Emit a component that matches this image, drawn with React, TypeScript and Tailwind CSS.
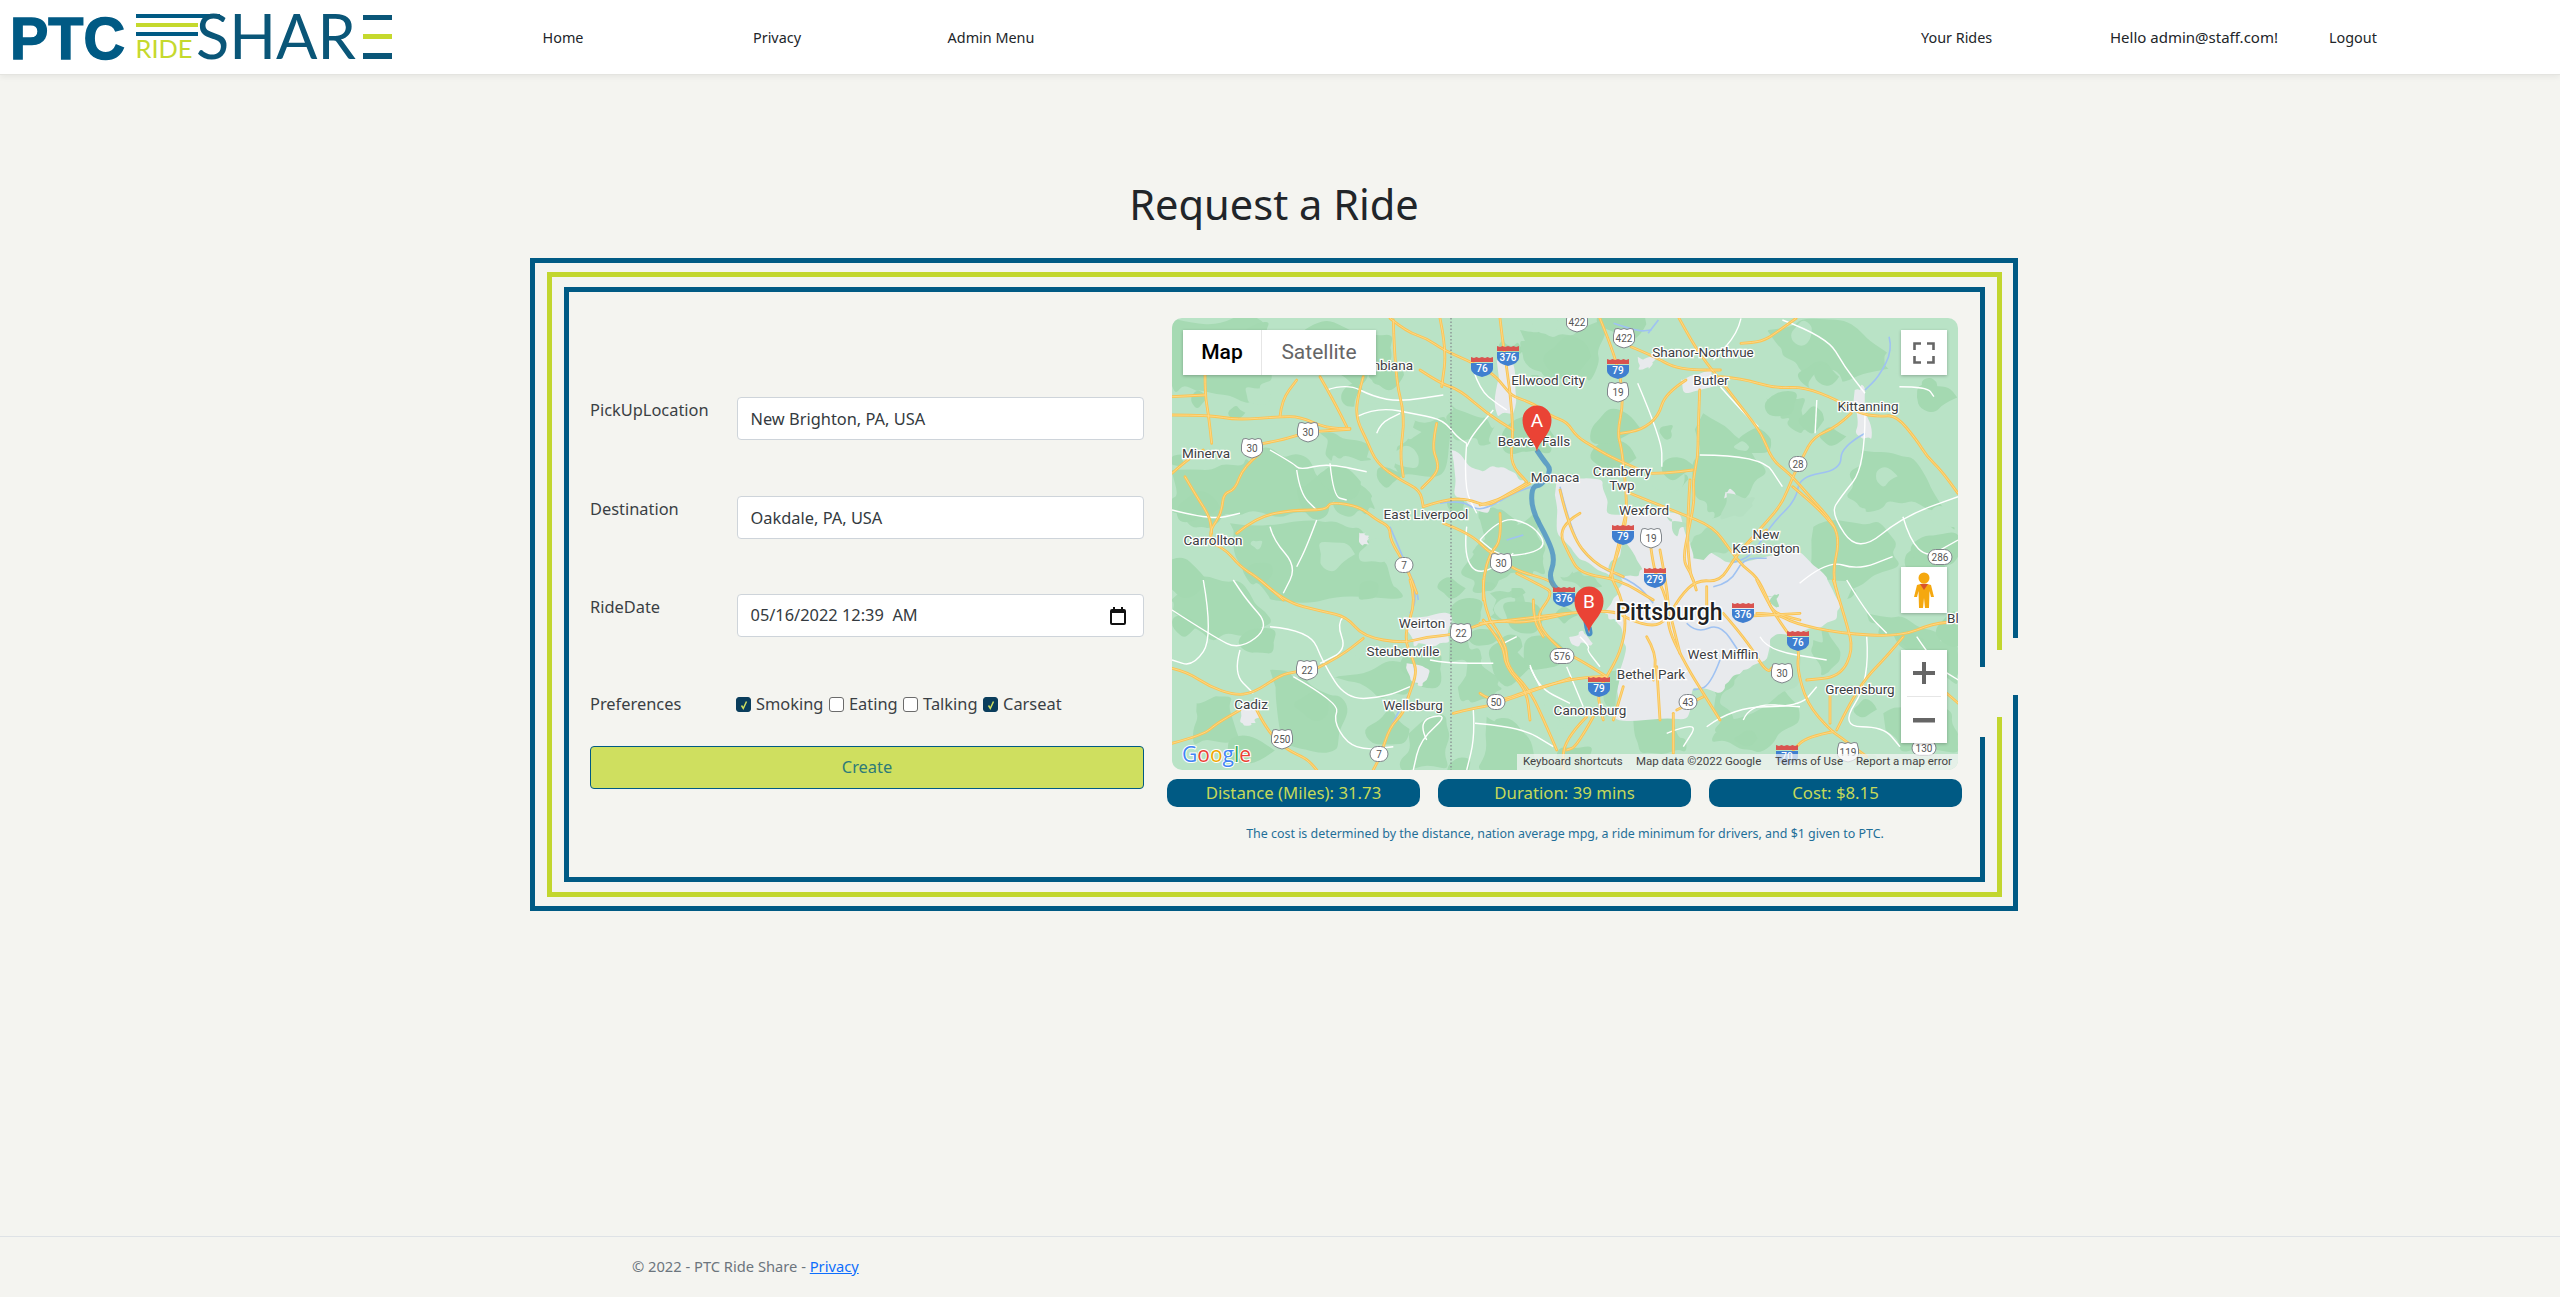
import React from "react";

type Pts = number[];
const z4 = (p: Pts) => p.map((v, i) => (i % 2 === 0 ? v / 3 - 12 : v / 3 - 18));
const z5 = (p: Pts) => p.map((v, i) => (i % 2 === 0 ? v / 2.904 + 328 : v / 3 - 18));
const z6 = (p: Pts) => p.map((v, i) => (i % 2 === 0 ? v / 3 - 12 : v / 3 + 262));
const z7 = (p: Pts) => p.map((v, i) => (i % 2 === 0 ? v / 3 + 428 : v / 3 + 262));
const z8 = (p: Pts) => p.map((v, i) => (i % 2 === 0 ? v / 3 + 308 : v / 3 + 162));

const smooth = (p: Pts) => {
  let d = `M${p[0].toFixed(1)} ${p[1].toFixed(1)}`;
  for (let i = 2; i < p.length - 2; i += 2) {
    const mx = (p[i] + p[i + 2]) / 2;
    const my = (p[i + 1] + p[i + 3]) / 2;
    d += `Q${p[i].toFixed(1)} ${p[i + 1].toFixed(1)} ${mx.toFixed(1)} ${my.toFixed(1)}`;
  }
  d += `L${p[p.length - 2].toFixed(1)} ${p[p.length - 1].toFixed(1)}`;
  return d;
};
const rnd = (n: number) => {
  const s = Math.sin(n * 12.9898 + 4.1) * 43758.5453;
  return s - Math.floor(s);
};
const wobble = (p: Pts, seed: number, amp = 7) => {
  const out: Pts = [];
  const n = p.length;
  for (let i = 0; i < n; i += 2) {
    const x = p[i], y = p[i + 1], x2 = p[(i + 2) % n], y2 = p[(i + 3) % n];
    out.push(x, y);
    for (let k = 1; k <= 3; k++) {
      const t = k / 4;
      out.push(
        x + (x2 - x) * t + (rnd(seed + i + k) - 0.5) * amp * 2,
        y + (y2 - y) * t + (rnd(seed + i + k + 50) - 0.5) * amp * 2,
      );
    }
  }
  return out;
};
const poly = (p: Pts, seed: number, amp?: number) => smooth(wobble(p, seed, amp)) + "Z";

const blob = (cx: number, cy: number, r: number, seed: number) => {
  const p: Pts = [];
  for (let a = 0; a < 8; a++) {
    const rr = r * (0.55 + rnd(seed + a) * 0.8);
    p.push(cx + Math.cos((a * Math.PI) / 4) * rr, cy + Math.sin((a * Math.PI) / 4) * rr * 0.8);
  }
  return smooth([...p, p[0], p[1]]) + "Z";
};

const yellow: Pts[] = [
  z4([690,55,740,95,800,115,850,150,920,180,1000,220,1040,270,1060,290,1120,310,1175,350,1220,365,1250,410,1300,440,1350,470,1440,510]),
  z4([135,220,135,285,145,340,155,430]),
  z4([36,290,135,285]),
  z4([36,345,150,345,230,360,360,350,420,350,500,385,570,385]),
  z4([250,440,345,425,415,405,450,395,570,388]),
  z4([480,230,520,300,560,380]),
  z4([610,230,590,300,590,360,620,420,650,490,720,540,780,570,790,620]),
  z4([360,350,365,300,410,240]),
  z4([700,60,705,230,735,350,720,460,730,530]),
  z4([780,210,840,250,900,270,980,340,1060,390]),
  z4([840,55,860,150,845,260]),
  z4([830,370,815,440,835,490,830,520,785,565]),
  z4([1020,55,1030,140,1050,270,1060,400,1050,490,1100,545]),
  z4([36,520,80,480,130,450]),
  z4([300,460,250,500,225,570,190,580,185,640,150,690,155,720]),
  z4([75,530,110,590,150,650,155,700]),
  z4([230,700,290,650,400,630,500,630,510,605,600,620,650,660,690,680,690,720,740,800,770,880]),
  z4([790,620,850,600,920,595,980,620,1030,590,1100,550]),
  z4([850,670,930,700,990,760,1010,760,1060,810,1170,840,1180,860]),
  z4([1020,640,1025,720,990,760,970,830,970,900]),
  z4([135,720,190,740,240,800,290,830,370,900]),
  z5([290,55,340,180,360,300,340,400,355,450,370,620,360,700,320,830]),
  z5([380,140,450,170,500,200,560,210,640,210]),
  z5([520,55,560,130,600,190,640,240,700,320,760,400,790,480,840,520,900,590,970,670,985,730,965,820,985,900]),
  z5([640,230,700,235,800,265,880,260,980,300,1040,340,1100,350,1150,345,1210,420,1240,470,1280,510,1330,580]),
  z5([580,270,575,400,575,470,560,540,565,600,550,680,530,780,555,820,570,870]),
  z5([540,240,480,280,460,350,410,390,350,400]),
  z5([440,520,480,520,560,510]),
  z5([1020,340,980,380,910,410,880,470,850,530,820,610,770,670,700,750]),
  z5([850,560,920,620,970,680]),
  z5([860,55,800,100,760,125,700,130]),
  z6([300,0,370,65,490,95,560,110,610,170,730,190,800,170,880,165,990,120,1090,130,1230,100]),
  z6([36,265,80,275,150,320,220,345,280,340,360,285,410,275]),
  z6([470,265,540,230,610,175]),
  z6([750,0,770,60,730,170,760,240,770,280,745,350,730,400,690,440,660,530,640,570]),
  z6([36,490,130,465,170,430,240,390]),
  z6([290,390,320,450,380,510,440,535,470,570]),
  z6([880,400,940,385,1000,375,1110,335,1230,295]),
  z6([990,120,1040,190,1040,260,1110,330,1160,440,1190,510]),
  z6([1280,410,1210,480,1210,570]),
  z6([1300,410,1250,500,1220,510]),
  z6([970,0,970,60,990,120]),
  z6([1120,60,1120,120,1150,170]),
  z7([470,100,530,100,580,130,720,160,900,170,1000,130,1075,125]),
  z7([470,0,510,80,550,140,600,210,590,260,620,370,690,450,720,470,800,530]),
  z7([700,0,740,130,760,210,720,290,620,300]),
  z7([910,170,860,230,800,290,750,370,710,450]),
  z7([690,340,690,430]),
  z7([700,455,620,470,580,510]),
  z7([220,400,220,520]),
  z7([310,350,230,390]),
  z7([1040,340,1075,370]),
  z8([0,75,60,60,150,10]),
  z8([450,40,600,100,700,140,750,210,790,260,830,290,860,350,880,400,960,420]),
  z8([0,430,100,420,250,400,400,390,450,420,520,440,560,420,600,350,650,300,720,305,760,240,800,190,860,150]),
  z8([630,0,620,150,630,280,640,300]),
  z8([440,90,410,220,390,290,420,340,440,430,420,520,380,590,350,640,370,720]),
  z8([510,180,520,270,550,330,570,400,600,520]),
  z8([540,210,570,370,560,440,620,560,670,640,720,720]),
  z8([110,280,190,320,220,340,160,420,240,510,300,540,380,590]),
  z8([0,640,40,670,150,630,260,600,340,590,380,590]),
  z8([10,420,70,490,75,560,140,630,150,720]),
  z8([730,400,800,480,860,580,880,560]),
  z8([530,560,540,720]),
  z8([500,470,530,520,520,600]),
  z8([430,620,400,720]),
  z8([300,100,230,140,270,230,300,280,420,300,520,360]),
  z8([240,30,270,160,340,250,430,290]),
  z8([680,320,680,380]),
  z8([780,410,960,400]),
];

const white: Pts[] = [
  z4([500,270,560,250,640,290,720,305,850,285]),
  z4([590,350,650,320,780,345,850,360,890,410,920,430]),
  z4([650,400,660,370,720,340]),
  z4([330,450,400,490,420,510,500,490,620,515]),
  z4([510,490,520,590,560,600]),
  z4([410,510,420,580,470,630]),
  z4([36,630,150,660,240,640]),
  z4([330,680,340,720,410,800,370,880]),
  z4([470,660,440,740,410,800]),
  z4([920,430,910,560,950,640]),
  z4([1000,330,940,400,920,440]),
  z4([940,210,960,270,1010,310,1040,330]),
  z4([920,680,910,770,960,830,1060,760]),
  z5([700,55,690,100,620,180]),
  z5([820,60,950,110,1000,200,1060,280]),
  z5([580,465,760,465,820,560]),
  z5([640,260,700,330,750,380]),
  z5([400,250,470,420,470,500]),
  z5([920,300,915,400]),
  z5([1060,340,1060,500,990,590,960,640,1040,760,1170,650,1330,590]),
  z5([1170,650,1210,790,1330,720]),
  z5([870,850,950,780,1040,810,1140,770]),
  z5([1160,260,1240,260,1260,290]),
  z6([130,0,160,170,100,260,36,240]),
  z6([36,90,160,170,240,210,330,140,260,60,220,0]),
  z6([240,210,220,280,280,340]),
  z6([330,140,450,150,490,250,560,360,680,350,750,320]),
  z6([550,110,530,130,560,210,480,250]),
  z6([400,290,540,370,520,420,560,490,620,510,700,500]),
  z6([800,480,770,420,870,400,780,480,760,570]),
  z6([810,240,860,250,1000,250]),
  z6([940,390,945,470,920,570]),
  z6([945,430,1080,440,1180,500]),
  z6([1110,255,1130,320,1230,370]),
  z7([320,440,400,380,600,380,650,320]),
  z7([200,460,300,420,250,500]),
  z7([740,0,800,100,860,160]),
  z7([800,170,810,300,720,440,850,440,900,500]),
  z7([430,420,450,370,600,380]),
  z7([950,170,1010,260,1075,300]),
  z7([480,170,500,210,680,240]),
  z8([0,180,60,110,150,130,200,190,160,220,60,230,0,180]),
  z8([300,470,330,500,320,510,360,560]),
  z8([150,560,180,620]),
  z8([260,560,310,680]),
  z8([70,490,110,470]),
];

const water: Pts[] = [
  z4([690,680,720,750,770,870,775,900]),
  z4([840,610,900,600,950,630,990,620,1060,580,1115,560]),
  z6([760,0,770,60,750,100]),
  z6([760,240,770,290,750,340,700,420,650,550]),
  z5([1130,110,1140,150,1100,230,1060,270]),
  z5([1060,400,990,440,990,510,870,530,860,600,790,670,730,770,670,790]),
  z5([330,70,400,95,440,90]),
  z5([460,60,430,100]),
  z8([240,20,280,180,350,260,470,310,520,370]),
  z8([620,430,650,460,720,430,780,520]),
  z8([720,540,690,620,640,630]),
  z8([700,320,750,310,790,235,860,235]),
  z8([80,180,130,165]),
];

const forests: Pts[] = [
  z4([36,55,300,55,340,240,280,300,120,270,36,260]),
  z4([36,510,250,500,310,440,440,470,520,570,470,640,240,650,130,680,36,640]),
  z4([210,670,470,660,600,680,680,790,740,900,330,900,250,820]),
  z4([560,520,640,590,620,650,520,620]),
  z4([480,400,620,430,640,480,540,480,500,470]),
  z4([760,360,860,360,850,520,720,530,710,440]),
  z4([860,290,980,350,1000,430,880,420]),
  z4([1010,700,1120,640,1160,740,1160,830,1040,820,960,880,900,820,950,740]),
  z4([1080,90,1200,100,1330,60,1290,250,1150,230,1090,180]),
  z5([590,340,700,420,780,520,640,650,600,640,560,540]),
  z5([780,300,890,290,880,390,810,360]),
  z5([780,90,1000,60,1150,200,950,250,820,170]),
  z5([1050,450,1200,470,1330,700,1200,600,1060,640,1000,590]),
  z5([910,680,1100,660,1170,800,900,900]),
  z6([36,0,240,0,340,130,160,190,36,100]),
  z6([330,270,430,290,560,370,530,510,370,490]),
  z6([520,290,740,250,750,330,660,360]),
  z6([870,170,960,200,1020,300,1000,360,900,370]),
  z6([110,370,220,350,240,480,100,500]),
  z6([780,430,860,410,870,570,720,570]),
  z6([980,410,1070,430,1140,570,950,570]),
  z7([640,180,690,150,720,240,660,290]),
  z7([330,300,520,290,600,420,480,520,330,490,370,420]),
  z7([800,100,1000,150,1075,200,1075,320,950,220,830,170]),
  z7([850,400,1000,370,1075,460,1075,520,900,520]),
  z7([120,400,220,390,260,520,120,520]),
  z8([0,120,40,80,120,130,130,230,60,300,0,290]),
  z8([30,340,120,330,170,400,30,410]),
];

const urban: Pts[] = [
  z8([230,0,370,0,380,105,600,100,640,215,640,170,740,250,960,215,1040,290,1085,370,1070,420,960,460,880,470,860,540,760,585,720,640,640,620,620,720,400,720,420,600,440,500,410,430,370,400,420,340,420,290,380,280,300,240,230,160]),
  z8([270,470,310,450,340,490,290,500]),
  z4([875,450,960,510,1030,500,1100,540,1020,600,980,640,880,590]),
  z4([1010,180,1060,190,1060,340,1010,340]),
  z5([530,240,620,210,620,260,540,280]),
  z5([400,170,450,170,430,210,400,210]),
  z6([730,110,870,100,870,190,770,190,760,200]),
  z6([740,250,810,270,790,320,750,300]),
  z6([240,380,290,390,290,430,250,430]),
  z5([1030,270,1060,260,1080,420,1030,400]),
  z5([655,575,680,575,685,615,660,610]),
  z4([600,700,630,705,630,735,600,730]),
];

const islands: Pts[] = [
  z8([385,270,430,180,490,270,470,290]),
  z8([640,235,640,170,700,140,750,210]),
  z8([560,110,620,130,590,170]),
  z8([240,290,300,270,370,320,310,330]),
  z8([740,40,830,50,790,110,720,120]),
  z8([860,350,900,340,890,380]),
  z8([790,570,860,540,880,470,960,470,960,620,760,720,720,660]),
  z8([400,720,360,600,420,560]),
];

const speckles = Array.from({ length: 110 }, (_, i) => {
  const x = rnd(i * 3 + 1) * 786;
  const y = rnd(i * 3 + 2) * 452;
  const r = 6 + rnd(i * 3 + 3) * 22;
  return { x, y, r, i };
}).filter((s) => !(s.x > 400 && s.x < 640 && s.y > 170 && s.y < 400));

const Lab = ({ x, y, t, big, anchor = "middle" }: { x: number; y: number; t: string; big?: boolean; anchor?: "middle" | "end" | "start" }) => (
  <text
    x={x}
    y={y}
    textAnchor={anchor}
    dominantBaseline="central"
    className={
      big
        ? "fill-[#202124] stroke-white stroke-[3px] [paint-order:stroke] text-[23px] font-medium"
        : "fill-[#3c4043] stroke-white stroke-[2.5px] [paint-order:stroke] text-[13.5px]"
    }
  >
    {t}
  </text>
);

const US = ({ x, y, t }: { x: number; y: number; t: string }) => (
  <g transform={`translate(${x} ${y})`}>
    <path d="M-9 -9 L-6 -9.5 L-3 -8.5 L0 -9.5 L3 -8.5 L6 -9.5 L9 -9 L10.5 -3 V3 Q9 8 0 10 Q-9 8 -10.5 3 V-3 Z" className="fill-white stroke-[#80868b] stroke-[1px]" />
    <text textAnchor="middle" dominantBaseline="central" className="fill-[#555] text-[10px]">{t}</text>
  </g>
);
const Oval = ({ x, y, t }: { x: number; y: number; t: string }) => (
  <g transform={`translate(${x} ${y})`}>
    <rect x={t.length > 2 ? -12 : -9} y="-7.5" width={t.length > 2 ? 24 : 18} height="15" rx="7.5" className="fill-white stroke-[#80868b] stroke-[1px]" />
    <text textAnchor="middle" dominantBaseline="central" className="fill-[#555] text-[10px]">{t}</text>
  </g>
);
const Inter = ({ x, y, t }: { x: number; y: number; t: string }) => (
  <g transform={`translate(${x} ${y})`}>
    <path d="M-11 -3 V3 Q-11 8 0 11 Q11 8 11 3 V-3 Z" className="fill-[#3f7fd0]" />
    <path d="M-11 -9 L-8 -8 L-5.5 -9 L-3 -8 L0 -9 L3 -8 L5.5 -9 L8 -8 L11 -9 V-4 H-11 Z" className="fill-[#d9534f]" />
    <text y="2.5" textAnchor="middle" dominantBaseline="central" className="fill-white text-[10px] font-medium">{t}</text>
  </g>
);
const Pin = ({ x, y, t }: { x: number; y: number; t: string }) => (
  <g transform={`translate(${x} ${y})`}>
    <path d="M0 0 C-1.5 -11 -14.5 -17 -14.5 -32 A14.5 14.5 0 0 1 14.5 -32 C14.5 -17 1.5 -11 0 0 Z" className="fill-[#ea4335]" />
    <text y="-32" textAnchor="middle" dominantBaseline="central" className="fill-white text-[19px]">{t}</text>
  </g>
);

const MapArt = () => (
  <svg viewBox="0 0 786 452" className="block h-[452px] w-[786px]" style={{ fontFamily: "Roboto, sans-serif" }}>
    <rect width="786" height="452" className="fill-[#b9e3c6]" />
    {forests.map((p, i) => <path key={i} d={poly(p, i * 7)} className="fill-[#a6dab3]" />)}
    {speckles.map((s) => <path key={s.i} d={blob(s.x, s.y, s.r, s.i * 5)} className={s.i % 3 === 0 ? "fill-[#b9e3c6]" : "fill-[#a4d9b1]"} />)}
    {urban.map((p, i) => <path key={i} d={poly(p, i * 11 + 3, i === 0 ? 3 : 4)} className="fill-[#e8eaed]" />)}
    {islands.map((p, i) => <path key={i} d={poly(p, i * 13 + 5, 4)} className={i % 2 ? "fill-[#a9dbb6]" : "fill-[#b5e0c2]"} />)}
    {water.map((p, i) => <path key={i} d={smooth(p)} className="fill-none stroke-[#9fc2f2] stroke-[1.6px]" />)}
    {white.map((p, i) => <path key={i} d={smooth(p)} className="fill-none stroke-white stroke-[1.4px]" strokeLinejoin="round" />)}
    {yellow.map((p, i) => <path key={i} d={smooth(p)} className="fill-none stroke-[#fac455] stroke-[2.8px]" strokeLinejoin="round" strokeLinecap="round" />)}
    {yellow.map((p, i) => <path key={i} d={smooth(p)} className="fill-none stroke-[#fdd98a] stroke-[0.9px]" strokeLinejoin="round" />)}
    <line x1="279" y1="0" x2="279" y2="452" className="stroke-[#80868b] stroke-[1.2px]" strokeDasharray="1.5 2" />
    <path d={smooth(z4([1130,450,1150,480,1175,510,1145,555,1115,560,1115,630,1165,720,1185,780,1165,835,1200,880,1250,900]))} className="fill-none stroke-[#4a8ec4] stroke-[5px] opacity-80" strokeLinejoin="round" />
    <path d={smooth(z8([315,425,320,465,335,465,330,440]))} className="fill-none stroke-[#4a8ec4] stroke-[3px]" />
    <Inter x={310} y={48} t="76" /><Inter x={336} y={37} t="376" /><Inter x={446} y={50} t="79" /><Inter x={451} y={216} t="79" />
    <Inter x={483} y={259} t="279" /><Inter x={392} y={278} t="376" /><Inter x={427} y={368} t="79" /><Inter x={571} y={294} t="376" />
    <Inter x={626} y={322} t="76" /><Inter x={615} y={436} t="70" />
    <US x={136} y={114} t="30" /><US x={80} y={130} t="30" /><US x={329} y={245} t="30" /><US x={405} y={4} t="422" /><US x={452} y={20} t="422" />
    <US x={446} y={74} t="19" /><US x={479} y={220} t="19" /><US x={289} y={315} t="22" /><US x={135} y={352} t="22" /><US x={110} y={421} t="250" />
    <US x={610} y={355} t="30" /><US x={676} y={434} t="119" />
    <Oval x={232} y={247} t="7" /><Oval x={207} y={436} t="7" /><Oval x={390} y={338} t="576" /><Oval x={324} y={384} t="50" /><Oval x={516} y={384} t="43" />
    <Oval x={626} y={146} t="28" /><Oval x={768} y={239} t="286" /><Oval x={752} y={430} t="130" />
    <Lab x={241} y={47} t="mbiana" anchor="end" /><Lab x={34} y={135} t="Minerva" /><Lab x={41} y={222} t="Carrollton" /><Lab x={254} y={196} t="East Liverpool" />
    <Lab x={376} y={62} t="Ellwood City" /><Lab x={362} y={123} t="Beaver Falls" /><Lab x={383} y={159} t="Monaca" />
    <Lab x={450} y={153} t="Cranberry" /><Lab x={450} y={167} t="Twp" /><Lab x={531} y={34} t="Shanor-Northvue" /><Lab x={539} y={62} t="Butler" />
    <Lab x={696} y={88} t="Kittanning" /><Lab x={472} y={192} t="Wexford" /><Lab x={594} y={216} t="New" /><Lab x={594} y={230} t="Kensington" />
    <Lab x={250} y={305} t="Weirton" /><Lab x={231} y={333} t="Steubenville" /><Lab x={79} y={386} t="Cadiz" /><Lab x={241} y={387} t="Wellsburg" />
    <Lab x={418} y={392} t="Canonsburg" /><Lab x={497} y={294} t="Pittsburgh" big /><Lab x={551} y={336} t="West Mifflin" /><Lab x={479} y={356} t="Bethel Park" />
    <Lab x={688} y={371} t="Greensburg" /><Lab x={775} y={300} t="Bl" anchor="start" />
    <Pin x={365} y={134} t="A" /><Pin x={417} y={315} t="B" />
    <text x="10" y="444" className="stroke-white stroke-[2px] [paint-order:stroke] text-[21px] font-medium" style={{ fontFamily: "'Open Sans', sans-serif" }}>
      <tspan className="fill-[#4285f4]">G</tspan><tspan className="fill-[#ea4335]">o</tspan><tspan className="fill-[#f0a800]">o</tspan><tspan className="fill-[#4285f4]">g</tspan><tspan className="fill-[#34a853]">l</tspan><tspan className="fill-[#ea4335]">e</tspan>
    </text>
  </svg>
);

const Logo = () => (
  <svg viewBox="0 0 400 74" className="h-[74px] w-[400px] shrink-0">
    <text x="10" y="59" textLength="115" lengthAdjust="spacingAndGlyphs" className="fill-[#005a84] stroke-[#005a84] stroke-[1.5px] text-[60px] font-bold" style={{ fontFamily: "'Liberation Sans', sans-serif" }}>PTC</text>
    <rect x="136" y="14" width="84" height="4" className="fill-[#005a84]" />
    <rect x="136" y="23" width="62" height="4" className="fill-[#c5d92d]" />
    <rect x="136" y="32" width="62" height="4" className="fill-[#005a84]" />
    <text x="135.5" y="58" textLength="57" lengthAdjust="spacingAndGlyphs" className="fill-[#c5d92d] text-[25px]" style={{ fontFamily: "Lato, sans-serif" }}>RIDE</text>
    <text x="196" y="59" textLength="160" lengthAdjust="spacingAndGlyphs" className="fill-[#0a5678] text-[61px]" style={{ fontFamily: "Lato, sans-serif" }}>SHAR</text>
    <rect x="363" y="15" width="29" height="5" className="fill-[#0a5678]" />
    <rect x="363" y="34" width="29" height="5" className="fill-[#c5d92d]" />
    <rect x="363" y="53" width="29" height="6" className="fill-[#0a5678]" />
  </svg>
);

const Check = ({ on, label }: { on?: boolean; label: string }) => (
  <label className="flex items-center">
    <span className={`flex h-[15px] w-[15px] items-center justify-center rounded-[3px] border ${on ? "border-[#0a3d5c] bg-[#0a3d5c]" : "border-[#6b6b6b] bg-white"}`}>
      {on && (
        <svg viewBox="0 0 12 12" className="h-[12px] w-[12px]">
          <path d="M3.5 6.5 L5.3 9.5 L8.5 2.5" className="fill-none stroke-[#cfdf5f] stroke-[1.5px]" />
        </svg>
      )}
    </span>
    <span className="ml-[5px]">{label}</span>
  </label>
);

const Pill = ({ children }: { children: React.ReactNode }) => (
  <div className="flex h-[28px] w-[253px] items-center justify-center rounded-[10px] bg-[#005a84] text-[16.8px] text-[#c5d95a]">{children}</div>
);

const inputCls = "h-[43px] w-[407px] rounded-[4px] border border-[#ced4da] bg-white px-[13px] text-[16.4px] text-[#343a40] outline-none";

const Row = ({ label, children }: { label: string; children: React.ReactNode }) => (
  <div className="mb-[55.5px] flex">
    <div className="w-[146.5px] pt-px leading-[24px]">{label}</div>
    {children}
  </div>
);

export default function App() {
  return (
    <div className="flex min-h-[1297px] flex-col bg-[#f4f4f0] text-[16.4px] text-[#3a3f44]" style={{ fontFamily: "'Noto Sans', sans-serif" }}>
      <header className="flex h-[75px] shrink-0 items-center border-b border-[#e4e4e0] bg-white text-[14.4px] text-[#212529] shadow-[0_2px_6px_rgba(0,0,0,0.06)]">
        <Logo />
        <nav className="ml-[56px] flex pt-px">
          <a className="w-[214px] text-center">Home</a>
          <a className="w-[214px] text-center">Privacy</a>
          <a className="w-[214px] text-center">Admin Menu</a>
        </nav>
        <nav className="ml-[823px] flex items-center pt-px">
          <a className="w-[189px]">Your Rides</a>
          <span className="w-[219px] text-[15px]">Hello admin@staff.com!</span>
          <a>Logout</a>
        </nav>
      </header>

      <main className="flex flex-1 flex-col items-center pr-[12px]">
        <h1 className="mt-[99px] h-[84px] text-center text-[41.6px] leading-[60px] text-[#212529]">Request a Ride</h1>
        <div className="relative w-[1488px] border-[5px] border-[#005a84] py-[9px] pl-[12px] pr-[11px]">
          <div className="absolute right-[-5px] top-[375px] h-[57px] w-[5px] bg-[#f4f4f0]" />
          <div className="relative border-[5px] border-[#c2d62e] px-[12px] py-[10px]">
            <div className="absolute right-[-5px] top-[373px] h-[67px] w-[5px] bg-[#f4f4f0]" />
            <div className="relative flex h-[595px] border-[5px] border-[#005a84]">
              <div className="absolute right-[-5px] top-[375px] h-[70px] w-[5px] bg-[#f4f4f0]" />
              <form className="ml-[21px] w-[554px] pt-[105px]">
                <Row label="PickUpLocation"><input className={inputCls} defaultValue="New Brighton, PA, USA" /></Row>
                <Row label="Destination"><input className={inputCls} defaultValue="Oakdale, PA, USA" /></Row>
                <Row label="RideDate">
                  <div className={`${inputCls} flex items-center justify-between`}>
                    <span className="whitespace-pre">05/16/2022 12:39  AM</span>
                    <svg viewBox="0 0 16 18" className="mr-[4px] h-[18px] w-[16px]">
                      <path d="M3 0 H5 V2 H11 V0 H13 V2 H14 Q16 2 16 4 V16 Q16 18 14 18 H2 Q0 18 0 16 V4 Q0 2 2 2 H3 Z M2 6 V16 H14 V6 Z" className="fill-[#111]" />
                    </svg>
                  </div>
                </Row>
                <div className="mt-[3px] flex h-[24px] items-center">
                  <div className="w-[146px]">Preferences</div>
                  <div className="flex gap-[5.5px]">
                    <Check on label="Smoking" />
                    <Check label="Eating" />
                    <Check label="Talking" />
                    <Check on label="Carseat" />
                  </div>
                </div>
                <button type="button" className="mt-[29px] h-[43px] w-full rounded-[4px] border border-[#005a84] bg-[#cfdf5f] text-[16.4px] text-[#2d7a78]">Create</button>
              </form>
              <div className="ml-[23px] w-[796px] pt-[26px]">
                <div className="relative mx-[5px] h-[452px] w-[786px] overflow-hidden rounded-[10px]">
                  <MapArt />
                  <div className="absolute left-[11px] top-[12px] flex h-[45px] bg-white text-[21px] shadow-[0_1px_3px_rgba(0,0,0,0.25)]" style={{ fontFamily: "Roboto, sans-serif" }}>
                    <div className="flex w-[79px] items-center justify-center border-r border-[#e6e6e6] font-medium text-black">Map</div>
                    <div className="flex w-[114px] items-center justify-center text-[#666]">Satellite</div>
                  </div>
                  <div className="absolute right-[11px] top-[12px] flex h-[45px] w-[46px] items-center justify-center bg-white shadow-[0_1px_3px_rgba(0,0,0,0.25)]">
                    <svg viewBox="0 0 22 22" className="h-[22px] w-[22px]">
                      <path d="M1.5 8 V1.5 H8 M14 1.5 H20.5 V8 M20.5 14 V20.5 H14 M8 20.5 H1.5 V14" className="fill-none stroke-[#666] stroke-[2.6px]" />
                    </svg>
                  </div>
                  <div className="absolute right-[11px] top-[249px] flex h-[46px] w-[46px] items-center justify-center bg-white shadow-[0_1px_3px_rgba(0,0,0,0.25)]">
                    <svg viewBox="0 0 22 36" className="h-[36px] w-[22px]">
                      <circle cx="11" cy="6" r="5.5" className="fill-[#f5a80f]" />
                      <path d="M4 13 Q11 10 18 13 L21 25 L18 25 L16.5 19 L16 36 L12 36 L11 26 L10 36 L6 36 L5.5 19 L4 25 L1 25 Z" className="fill-[#f5a80f]" />
                      <path d="M7 12 L11 18 L15 12 Z" className="fill-[#d9532c]" />
                    </svg>
                  </div>
                  <div className="absolute right-[11px] top-[332px] flex h-[93px] w-[46px] flex-col items-center bg-white shadow-[0_1px_3px_rgba(0,0,0,0.25)]">
                    <div className="flex h-[46px] w-full items-center justify-center">
                      <svg viewBox="0 0 22 22" className="h-[22px] w-[22px]"><path d="M9 0 H13 V9 H22 V13 H13 V22 H9 V13 H0 V9 H9 Z" className="fill-[#666]" /></svg>
                    </div>
                    <div className="h-px w-[34px] bg-[#e6e6e6]" />
                    <div className="flex h-[46px] w-full items-center justify-center">
                      <svg viewBox="0 0 22 22" className="h-[22px] w-[22px]"><rect x="0" y="9" width="22" height="4.5" className="fill-[#666]" /></svg>
                    </div>
                  </div>
                  <div className="absolute bottom-0 right-0 flex h-[16px] w-[441px] items-center whitespace-nowrap bg-[rgba(245,245,245,0.72)] text-[11.5px] text-[#444]" style={{ fontFamily: "Roboto, sans-serif" }}>
                    <span className="ml-[6px] w-[113px]">Keyboard shortcuts</span>
                    <span className="w-[139px]">Map data ©2022 Google</span>
                    <span className="w-[81px]">Terms of Use</span>
                    <span>Report a map error</span>
                  </div>
                </div>
                <div className="mt-[9px] flex gap-[18px]">
                  <Pill>Distance (Miles): 31.73</Pill>
                  <Pill>Duration: 39 mins</Pill>
                  <Pill>Cost: $8.15</Pill>
                </div>
                <p className="mt-[18px] text-center text-[12.45px] leading-[18px] text-[#1f6f98]">The cost is determined by the distance, nation average mpg, a ride minimum for drivers, and $1 given to PTC.</p>
              </div>
            </div>
          </div>
        </div>
      </main>

      <footer className="h-[61px] border-t border-[#dee2e6] pl-[632px] pt-[19px] text-[14.7px] leading-[21px] text-[#6c757d]">
        © 2022 - PTC Ride Share - <a className="text-[#0d6efd] underline">Privacy</a>
      </footer>
    </div>
  );
}
